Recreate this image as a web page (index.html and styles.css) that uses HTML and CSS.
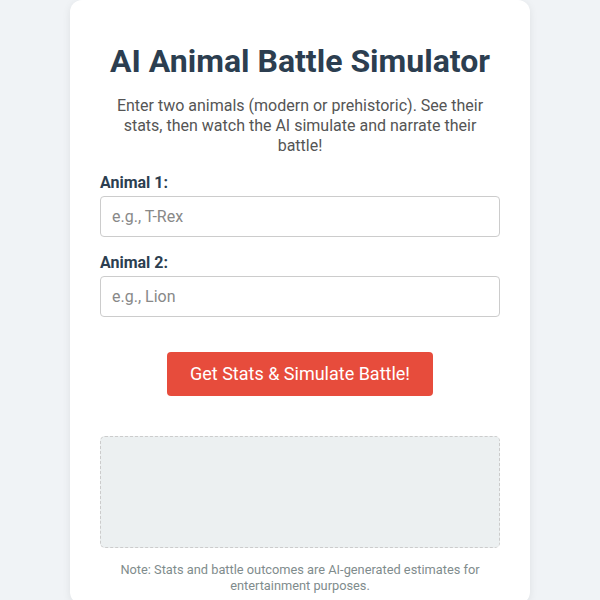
FILE: index.html
```html
<!DOCTYPE html>
<html lang="en">
<head>
    <meta charset="UTF-8">
    <meta name="viewport" content="width=device-width, initial-scale=1.0">
    <title>AI Animal Battle Simulator</title>
    <link rel="stylesheet" href="styles.css">
</head>
<body>

    <div class="container">
        <h1>AI Animal Battle Simulator</h1>
        <p class="intro">Enter two animals (modern or prehistoric). See their stats, then watch the AI simulate and narrate their battle!</p>

        <div class="input-group">
            <label for="animal1">Animal 1:</label>
            <input type="text" id="animal1" placeholder="e.g., T-Rex">
        </div>

        <div class="input-group">
            <label for="animal2">Animal 2:</label>
            <input type="text" id="animal2" placeholder="e.g., Lion">
        </div>

        <div class="actions">
            <button id="battleBtn">Get Stats &amp; Simulate Battle!</button>
        </div>

        <div class="result" id="result"></div>

        <p class="note">Note: Stats and battle outcomes are AI-generated estimates for entertainment purposes.</p>
    </div>

</body>
</html>
```

FILE: styles.css
```css
body {
    font-family: Roboto, "Noto Sans", Arial, sans-serif;
    background-color: #f0f3f6;
    margin: 0;
    color: #333;
}
.container {
    width: 400px;
    margin: 0 auto;
    background: #fff;
    padding: 20px 30px 10px;
    border-radius: 12px;
    box-shadow: 0 2px 8px rgba(0, 0, 0, 0.08);
}
h1 {
    color: #2c3e50;
    text-align: center;
    font-size: 32px;
    margin: 22px 0 16px;
}
.intro {
    text-align: center;
    color: #555;
    font-size: 16px;
    line-height: 20px;
    margin: 0 0 17px;
}
.input-group {
    margin-bottom: 16px;
}
label {
    display: block;
    font-weight: bold;
    color: #2c3e50;
    font-size: 16px;
    margin-bottom: 4px;
}
input {
    width: 100%;
    box-sizing: border-box;
    height: 41px;
    padding: 10px 11px;
    border: 1px solid #ccc;
    border-radius: 4px;
    font-family: inherit;
    font-size: 16px;
}
input::placeholder {
    color: #888;
}
.actions {
    text-align: center;
    margin-top: 35px;
}
button {
    background-color: #e74c3c;
    color: #fff;
    border: none;
    border-radius: 4px;
    padding: 11px 23px 12px;
    font-family: inherit;
    font-size: 18px;
    cursor: pointer;
}
.result {
    margin-top: 40px;
    height: 110px;
    background-color: #ecf0f1;
    border: 1px dashed #ccc;
    border-radius: 5px;
}
.note {
    text-align: center;
    color: #7f8c8d;
    font-size: 12.8px;
    line-height: 16px;
    margin: 14px 0 0;
}
```
